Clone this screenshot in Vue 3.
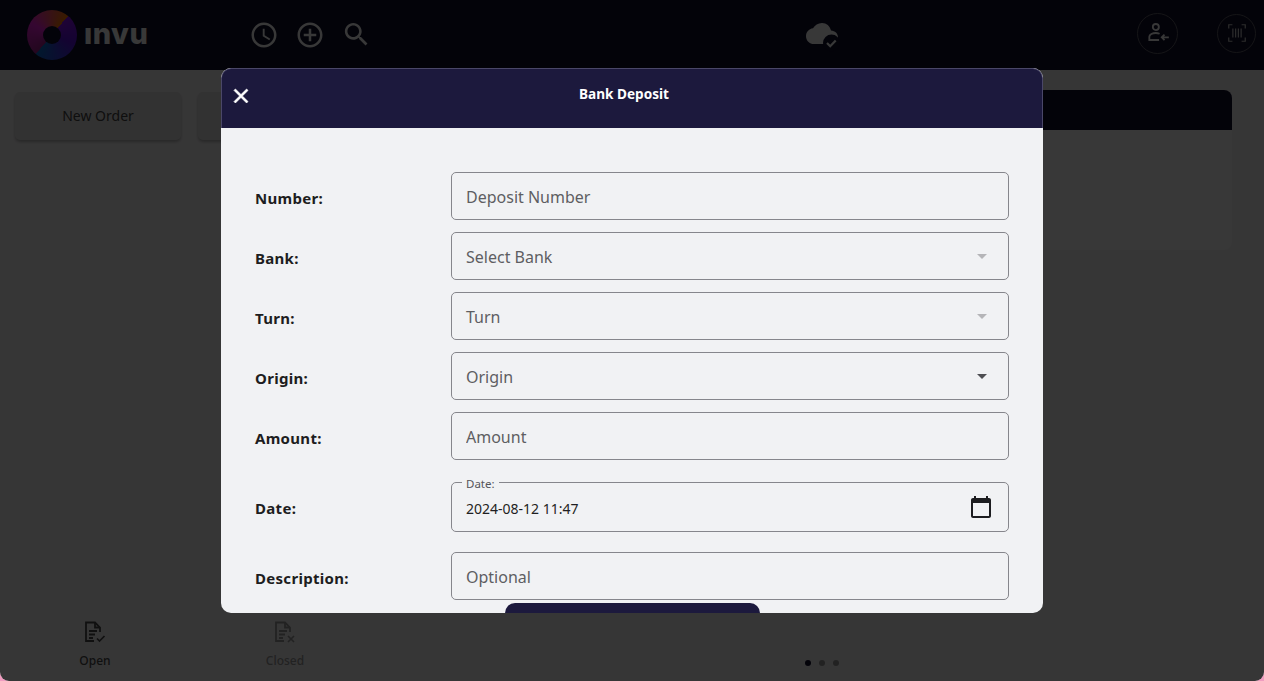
<script setup>
const campos = [
  { id: 'number', label: 'Number:', placeholder: 'Deposit Number', tipo: 'input' },
  { id: 'bank', label: 'Bank:', placeholder: 'Select Bank', tipo: 'select', apagado: true },
  { id: 'turn', label: 'Turn:', placeholder: 'Turn', tipo: 'select', apagado: true },
  { id: 'origin', label: 'Origin:', placeholder: 'Origin', tipo: 'select' },
  { id: 'amount', label: 'Amount:', placeholder: 'Amount', tipo: 'input' },
];
</script>

<template>
  <div class="app">
    <header class="topbar">
      <div class="logo"><span class="logo-ring"></span><span class="logo-text">ınvu</span></div>
      <nav class="top-icons">
        <svg viewBox="0 0 24 24" width="30" height="30"><path d="M11.99 2C6.47 2 2 6.48 2 12s4.47 10 9.99 10C17.52 22 22 17.52 22 12S17.52 2 11.99 2zM12 20c-4.42 0-8-3.58-8-8s3.58-8 8-8 8 3.58 8 8-3.58 8-8 8zm.5-13H11v6l5.25 3.15.75-1.23-4.5-2.67z"/></svg>
        <svg viewBox="0 0 24 24" width="30" height="30"><path d="M13 7h-2v4H7v2h4v4h2v-4h4v-2h-4V7zm-1-5C6.48 2 2 6.48 2 12s4.48 10 10 10 10-4.48 10-10S17.52 2 12 2zm0 18c-4.41 0-8-3.59-8-8s3.59-8 8-8 8 3.59 8 8-3.59 8-8 8z"/></svg>
        <svg class="search" viewBox="0 0 24 24" width="31" height="31"><path d="M15.5 14h-.79l-.28-.27C15.41 12.59 16 11.11 16 9.5 16 5.91 13.09 3 9.5 3S3 5.91 3 9.5 5.91 16 9.5 16c1.61 0 3.09-.59 4.23-1.57l.27.28v.79l5 4.99L20.49 19l-4.99-5zm-6 0C7.01 14 5 11.99 5 9.5S7.01 5 9.5 5 14 7.01 14 9.5 11.99 14 9.5 14z"/></svg>
      </nav>
      <svg class="cloud" viewBox="0 0 36 30" width="36" height="30">
        <path d="M26 8.500C25 4 21.500 1 17 1 13 1 9.800 3.200 8 6.300 3.800 6.800 1 10.200 1 14.200 1 18.600 4.500 22 9 22h17c4 0 7-3 7-6.800 0-3.600-3-6.400-7-6.700z" fill="#fff"/>
        <circle cx="26.500" cy="21" r="8.500" fill="#100e2c"/>
        <path d="M22 21l3.200 3.200 5.500-5.800" fill="none" stroke="#fff" stroke-width="2.200"/>
      </svg>
      <div class="top-actions">
        <button class="round">
          <svg viewBox="0 0 24 24" width="26" height="26" fill="none" stroke="#fff" stroke-width="1.700">
            <circle cx="10" cy="6.500" r="2.800"/>
            <path d="M13.500 12.700c-1-.4-2.200-.7-3.500-.7-3 0-6 1.400-6 3.500V18.500h9"/>
            <path d="M22 16h-6.500M18 13.500L15.500 16l2.500 2.500"/>
          </svg>
        </button>
        <button class="round barcode">
          <svg viewBox="0 0 24 24" width="22" height="22" fill="none" stroke="#c8c8c8" stroke-width="1.300">
            <path d="M3 7V3h4M17 3h4v4M21 17v4h-4M7 21H3v-4"/>
            <path d="M7.500 7v10M10.500 7v10M13.500 7v10M16.500 7v10"/>
          </svg>
        </button>
      </div>
    </header>

    <main class="contenido">
      <div class="acciones">
        <button class="accion">New Order</button>
        <button class="accion"></button>
      </div>
      <section class="panel">
        <div class="panel-head"></div>
        <div class="panel-body"></div>
      </section>
    </main>

    <footer class="pie">
      <div class="tab">
        <svg viewBox="0 0 24 24" width="24" height="24" fill="none" stroke="#4a4a4a" stroke-width="1.800">
          <path d="M12 21H4V2.500h9L18 7.500V12"/>
          <path d="M13 2.500v5h5M7 11h8M7 14.500h6M7 18h4"/>
          <path d="M15 18.500l2.500 2.500 5-5" stroke-width="1.700"/>
        </svg>
        <span>Open</span>
      </div>
      <div class="tab cerrado">
        <svg viewBox="0 0 24 24" width="24" height="24" fill="none" stroke="#9b9b9b" stroke-width="1.800">
          <path d="M12 21H4V2.500h9L18 7.500V12"/>
          <path d="M13 2.500v5h5M7 11h8M7 14.500h6M7 18h4"/>
          <path d="M16 16l6 6M22 16l-6 6" stroke-width="1.700"/>
        </svg>
        <span>Closed</span>
      </div>
      <div class="puntos"><i class="activo"></i><i></i><i></i></div>
    </footer>

    <div class="velo"></div>

    <div class="modal">
      <div class="modal-head">
        <button class="cerrar" aria-label="close">
          <svg viewBox="0 0 24 24" width="24" height="24"><path d="M19 6.410L17.590 5 12 10.590 6.410 5 5 6.410 10.590 12 5 17.590 6.410 19 12 13.410 17.590 19 19 17.590 13.410 12z" fill="#fff" stroke="#fff" stroke-width=".7"/></svg>
        </button>
        <h1>Bank Deposit</h1>
      </div>
      <div class="modal-body">
        <div v-for="c in campos" :key="c.id" class="fila">
          <label :for="c.id">{{ c.label }}</label>
          <input v-if="c.tipo === 'input'" :id="c.id" class="caja" type="text" :placeholder="c.placeholder">
          <div v-else class="caja selector" :id="c.id">
            <span>{{ c.placeholder }}</span>
            <i class="flecha" :class="{ apagada: c.apagado }"></i>
          </div>
        </div>

        <div class="fila fila-fecha">
          <label>Date:</label>
          <fieldset class="fecha">
            <legend>Date:</legend>
            <span>2024-08-12 11:47</span>
            <svg viewBox="0 0 24 24" width="24" height="24"><path d="M20 3h-1V1h-2v2H7V1H5v2H4c-1.100 0-2 .9-2 2v16c0 1.100.9 2 2 2h16c1.100 0 2-.9 2-2V5c0-1.100-.9-2-2-2zm0 18H4V8h16v13z" fill="#1d1d20"/></svg>
          </fieldset>
        </div>

        <div class="fila">
          <label for="description">Description:</label>
          <input id="description" class="caja" type="text" placeholder="Optional">
        </div>

        <button class="guardar" aria-label="save"></button>
      </div>
    </div>
  </div>
</template>

<style>
html, body {
  margin: 0;
  height: 100%;
  background: #f09cc0;
}
</style>

<style scoped>
.app {
  position: relative;
  display: flex;
  flex-direction: column;
  height: 100vh;
  overflow: hidden;
  background: #f6f5f6;
  border-radius: 0 0 9px 9px;
  font-family: "Noto Sans", sans-serif;
}
button {
  font-family: inherit;
}

/* barra superior */
.topbar {
  display: flex;
  align-items: center;
  flex: none;
  height: 70px;
  background: #100e2c;
  color: #fff;
}
.logo {
  display: flex;
  align-items: center;
  gap: 7px;
  margin-left: 27px;
  width: 120px;
}
.logo-ring {
  position: relative;
  flex: none;
  width: 50px;
  height: 50px;
  border-radius: 50%;
  background: conic-gradient(from 40deg, #8a10f0 0deg, #5a10e0 70deg, #0a6fd0 180deg, #a0208c 181deg, #f020e0 260deg, #ff7a00 359deg);
}
.logo-ring::after {
  content: "";
  position: absolute;
  left: 16px;
  top: 16px;
  width: 18px;
  height: 18px;
  border-radius: 50%;
  background: #100e2c;
}
.logo-text {
  margin-bottom: 3px;
  font-family: Inter, sans-serif;
  font-weight: 800;
  font-size: 29px;
  line-height: 29px;
  letter-spacing: .5px;
  color: #fff;
}
.top-icons {
  display: flex;
  align-items: center;
  gap: 16px;
  margin-left: 102px;
}
.top-icons svg {
  fill: #fff;
}
.top-icons .search {
  margin-top: -1px;
}
.cloud {
  margin-left: 433px;
  margin-top: 4px;
}
.top-actions {
  display: flex;
  align-items: center;
  gap: 39px;
  margin-left: auto;
  margin-right: 8px;
  margin-top: -4px;
}
.round {
  display: flex;
  align-items: center;
  justify-content: center;
  width: 41px;
  height: 41px;
  padding: 0;
  border: 1px solid #606068;
  border-radius: 50%;
  background: transparent;
  box-sizing: border-box;
}
.round.barcode {
  width: 39px;
  height: 39px;
}

/* contenido de fondo */
.contenido {
  display: flex;
  flex: 1;
  justify-content: space-between;
  padding: 20px 32px 0 15px;
}
.acciones {
  display: flex;
  gap: 17px;
  padding-top: 2px;
}
.accion {
  width: 166px;
  height: 48px;
  padding-bottom: 2px;
  border: none;
  border-radius: 5px;
  background: #e4e3e3;
  box-shadow: 0 2px 3px rgba(0, 0, 0, .25);
  color: #444;
  font-size: 14px;
}
.panel {
  width: 700px;
}
.panel-head {
  height: 40px;
  background: #100e2c;
  border-radius: 8px 8px 0 0;
}
.panel-body {
  height: 120px;
  background: #fcfcfc;
  border-radius: 0 0 8px 8px;
}
.pie {
  display: flex;
  align-items: flex-start;
  flex: none;
  height: 61px;
}
.tab {
  display: flex;
  flex-direction: column;
  align-items: center;
  width: 190px;
  color: #4a4a4a;
  font-size: 12px;
  font-weight: 500;
}
.tab svg {
  margin-left: -2px;
}
.tab span {
  margin-top: 8px;
  line-height: 17px;
}
.tab.cerrado {
  color: #9b9b9b;
}
.puntos {
  display: flex;
  gap: 8px;
  margin-left: 425px;
  margin-top: 40px;
}
.puntos i {
  width: 6px;
  height: 6px;
  border-radius: 50%;
  background: #9b9b9b;
}
.puntos i.activo {
  background: #100e2c;
}

/* modal */
.velo {
  position: absolute;
  inset: 0;
  background: rgba(0, 0, 0, .78);
}
.modal {
  position: absolute;
  left: 221px;
  top: 68px;
  display: flex;
  flex-direction: column;
  width: 822px;
  height: 545px;
  overflow: hidden;
  border-radius: 10px;
  background: #f1f2f4;
}
.modal-head {
  position: relative;
  flex: none;
  height: 60px;
  box-sizing: border-box;
  border: 1px solid #4a4768;
  border-bottom: none;
  border-radius: 10px 10px 0 0;
  background: #1c193d;
}
.modal-head h1 {
  margin: 0;
  padding-top: 15px;
  color: #fff;
  font-size: 13.600px;
  font-weight: 700;
  line-height: 19px;
  text-align: center;
  transform: translateX(-8px);
}
.cerrar {
  position: absolute;
  left: 7px;
  top: 15px;
  display: flex;
  padding: 0;
  border: none;
  background: none;
}
.modal-body {
  flex: 1;
  min-height: 0;
  overflow: hidden;
  padding: 44px 34px 0;
}
.fila {
  display: flex;
  align-items: center;
  margin-bottom: 12px;
}
.fila label {
  flex: none;
  width: 196px;
  padding-top: 4px;
  color: #1d1d20;
  font-size: 15px;
  font-weight: 700;
  letter-spacing: .3px;
}
.caja {
  flex: 1;
  min-width: 0;
  height: 48px;
  box-sizing: border-box;
  padding: 2px 14px 0;
  border: 1px solid #86868c;
  border-radius: 5px;
  background: transparent;
  color: #5e5e62;
  font-family: inherit;
  font-size: 16px;
  outline: none;
}
.caja::placeholder {
  color: #5e5e62;
  opacity: 1;
}
.selector {
  display: flex;
  align-items: center;
  justify-content: space-between;
}
.flecha {
  width: 0;
  height: 0;
  margin-right: 7px;
  margin-top: -2px;
  border-left: 5px solid transparent;
  border-right: 5px solid transparent;
  border-top: 5px solid #4e4e52;
}
.flecha.apagada {
  border-top-color: #b5b5b8;
}
.fila-fecha {
  margin-top: 13px;
  margin-bottom: 20px;
}
.fila-fecha label {
  padding-top: 11px;
}
.fecha {
  flex: 1;
  display: flex;
  align-items: center;
  justify-content: space-between;
  min-width: 0;
  height: 59px;
  box-sizing: border-box;
  margin: 0;
  padding: 0 14px;
  border: 1px solid #86868c;
  border-radius: 5px;
  color: #1f1f22;
  font-size: 14px;
}
.fecha legend {
  padding: 4px 4px 0;
  margin-left: -4px;
  color: #55555a;
  font-size: 11.500px;
  line-height: 14px;
}
.fecha span {
  margin-top: -6px;
}
.fecha svg {
  margin-right: 1px;
  margin-top: -8px;
}
.guardar {
  display: block;
  width: 255px;
  height: 48px;
  margin: -9px auto 0;
  position: relative;
  border: none;
  border-radius: 10px;
  background: #1c193d;
}
</style>
